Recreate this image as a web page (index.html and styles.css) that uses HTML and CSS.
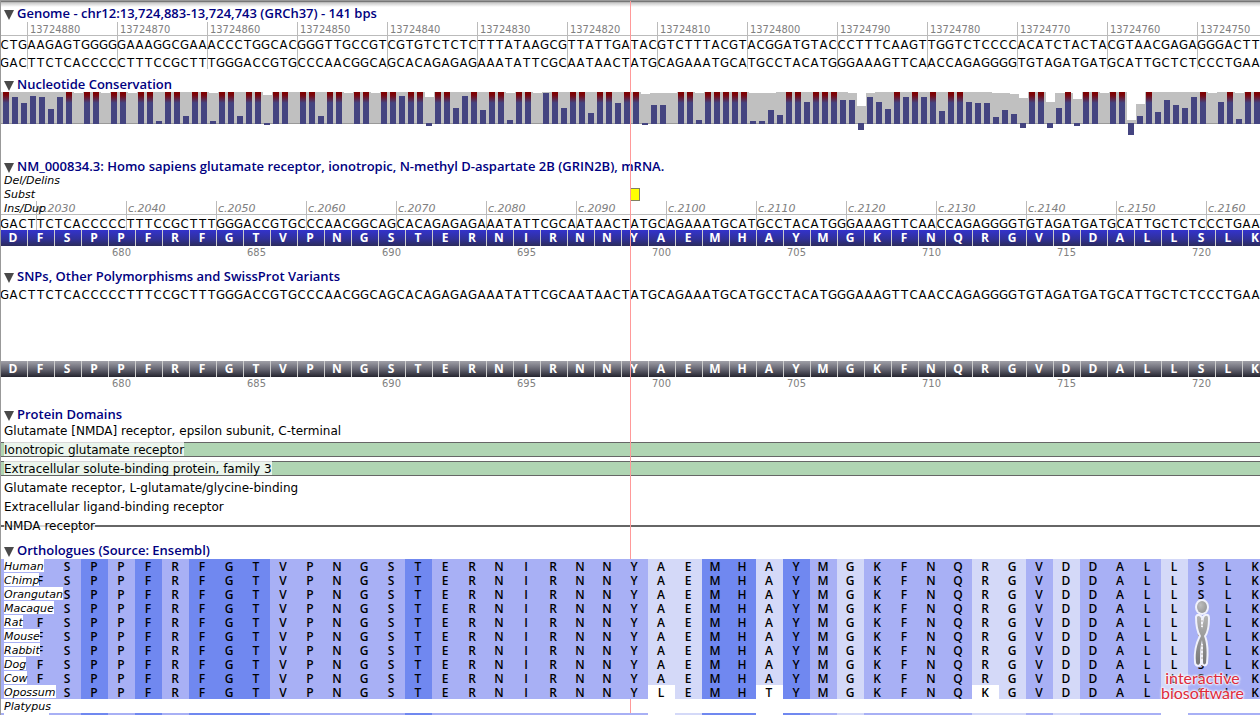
FILE: index.html
```
<!DOCTYPE html>
<html lang="en">
<head>
<meta charset="utf-8">
<title>Genome - chr12:13,724,883-13,724,743 (GRCh37)</title>
<link rel="stylesheet" href="styles.css">
</head>
<body>
<svg class="defs" width="0" height="0" aria-hidden="true">
  <defs>
    <symbol id="arrow" viewBox="0 0 10 10"><path d="M0 0h10L5 10z" fill="#4a4a4a"/></symbol>
    <linearGradient id="hot" x1="0" y1="0" x2="0" y2="1">
      <stop offset="0" stop-color="#800000"/>
      <stop offset="0.09" stop-color="#7c0408"/>
      <stop offset="0.34" stop-color="#444480"/>
      <stop offset="1" stop-color="#444480"/>
    </linearGradient>
  </defs>
</svg>
<main class="viewer">
  <section class="track genome">
    <h2 class="title"><button type="button"><svg class="arrow"><use href="#arrow"/></svg>Genome - chr12:13,724,883-13,724,743 (GRCh37) - 141 bps</button></h2>
    <div class="scaled scaled-genome">
      <div class="ruler" id="genome-ruler"></div>
      <div class="bases" data-strand="template"></div>
      <div class="bases" data-strand="coding"></div>
    </div>
  </section>

  <section class="track conservation">
    <h2 class="title"><button type="button"><svg class="arrow"><use href="#arrow"/></svg>Nucleotide Conservation</button></h2>
    <svg class="chart" id="chart" width="1260" height="46"></svg>
  </section>

  <section class="track transcript">
    <h2 class="title"><button type="button"><svg class="arrow"><use href="#arrow"/></svg>NM_000834.3: Homo sapiens glutamate receptor, ionotropic, N-methyl D-aspartate 2B (GRIN2B), mRNA.</button></h2>
    <div class="variant-row">Del/Delins</div>
    <div class="variant-row">Subst<span class="marker"></span></div>
    <div class="scaled scaled-mrna">
      <div class="ruler" id="mrna-ruler"><span class="row-name">Ins/Dup</span></div>
      <div class="bases compact" data-strand="coding"></div>
    </div>
    <div class="aminos blue"></div>
    <div class="numbers"></div>
  </section>

  <section class="track snps">
    <h2 class="title"><button type="button"><svg class="arrow"><use href="#arrow"/></svg>SNPs, Other Polymorphisms and SwissProt Variants</button></h2>
    <div class="bases" data-strand="coding"></div>
    <div class="aminos grey"></div>
    <div class="numbers"></div>
  </section>

  <section class="track domains">
    <h2 class="title"><button type="button"><svg class="arrow"><use href="#arrow"/></svg>Protein Domains</button></h2>
    <ul class="domain-list">
      <li class="domain"><span>Glutamate [NMDA] receptor, epsilon subunit, C-terminal</span></li>
      <li class="domain filled"><span>Ionotropic glutamate receptor</span></li>
      <li class="domain filled"><span>Extracellular solute-binding protein, family 3</span></li>
      <li class="domain"><span>Glutamate receptor, L-glutamate/glycine-binding</span></li>
      <li class="domain"><span>Extracellular ligand-binding receptor</span></li>
      <li class="domain lined"><span>NMDA receptor</span></li>
    </ul>
  </section>

  <section class="track orthologues">
    <h2 class="title"><button type="button"><svg class="arrow"><use href="#arrow"/></svg>Orthologues (Source: Ensembl)</button></h2>
    <div id="alignment"></div>
  </section>

  <div class="cursor-line"></div>
  <div class="left-edge"></div>

  <div class="brand">
    <svg width="20" height="72" viewBox="0 0 20 72" aria-hidden="true">
      <defs>
        <linearGradient id="metal" x1="0" y1="0" x2="0" y2="1">
          <stop offset="0" stop-color="#b4b4b4"/><stop offset="1" stop-color="#777"/>
        </linearGradient>
        <radialGradient id="head" cx="0.35" cy="0.35" r="0.8">
          <stop offset="0" stop-color="#bdbdbd"/><stop offset="1" stop-color="#929292"/>
        </radialGradient>
      </defs>
      <ellipse cx="10" cy="9" rx="5" ry="6" fill="url(#head)" stroke="#f0f1fc" stroke-width="4" paint-order="stroke"/>
      <path d="M5 19C6 17 8 18 9 20L10 31L12 20C13 17 16 17 16 20C16 28 15 34 12 38C15 46 15 56 14 65C13 67 11 67 11 64C11 56 11 48 10 42C8 49 8 56 8 65C7 68 4 67 4 64C3 54 5 46 9 38C6 33 5 26 5 19Z" fill="url(#metal)" stroke="#f0f1fc" stroke-width="4" stroke-linejoin="round" paint-order="stroke"/>
      <path d="M10 21v8M10 46v18" stroke="#f4f4fa" stroke-width="2"/>
      <path d="M10 22v7M10 47v16" stroke="#b5b0ac" stroke-width="1" stroke-dasharray="2 2"/>
    </svg>
    <span>interactive</span>
    <span>biosoftware</span>
  </div>
</main>
<script src="tracks.js"></script>
</body>
</html>
```
FILE: styles.css
```
* { box-sizing: border-box; }

body {
  margin: 0;
  background: #fff;
  color: #000;
  font: 12px/17px "DejaVu Sans", Verdana, sans-serif;
}

.defs { position: absolute; }

.viewer {
  position: relative;
  height: 100vh;
  overflow: hidden;
  padding-top: 6px;
  background: linear-gradient(#999 0, #999 1px, #777 1px, #777 2px, #bbb 2px, #bbb 3px, #ccc 3px, #fff 7px) no-repeat 0 0 / 100% 7px;
}

.title {
  margin: 0;
  height: 15px;
  font: 600 13px/15px "Open Sans", "Trebuchet MS", sans-serif;
}
.title button {
  display: flex;
  gap: 3px;
  margin: 0;
  padding: 0 0 0 4px;
  border: 0;
  background: none;
  color: #000080;
  font: inherit;
  white-space: nowrap;
}
.arrow { width: 10px; height: 10px; margin-top: 4px; }
.genome .title { height: 16px; }

.scaled {
  background-image: linear-gradient(to right, #bbb 1px, transparent 1px);
  background-repeat: repeat-x;
  background-size: 90px 100%;
}
.scaled-genome { background-size: 90px 47px; background-position: 27px 0; }
.scaled-mrna { background-position: 36px 0; }

.ruler {
  position: relative;
  display: flex;
  height: 14px;
  border-bottom: 1px solid #bbb;
  color: #808080;
  font-size: 11px;
  line-height: 16px;
}
.ruler .tick { flex: none; width: 90px; }
#genome-ruler { padding-left: 30px; font-family: "DejaVu Sans Condensed", Tahoma, sans-serif; }
#mrna-ruler { padding-left: 38px; font-style: italic; }
.row-name { position: absolute; left: 4px; top: 0; color: #000; }

.bases {
  display: flex;
  height: 18px;
  font: 13px/18px "DejaVu Sans Condensed", Tahoma, sans-serif;
}
.bases span { flex: none; width: 9px; display: flex; justify-content: center; }
.bases.compact { height: 15px; }

.conservation { padding-top: 5px; }
.chart { display: block; }

.transcript { padding-top: 21px; }
.transcript .title { height: 14px; }
.variant-row {
  position: relative;
  height: 14px;
  padding-left: 4px;
  font-size: 11px;
  line-height: 16px;
  font-style: italic;
}
.marker {
  position: absolute;
  left: 630px;
  top: 1px;
  width: 10px;
  height: 13px;
  background: #ff0;
  border: 1px solid #808060;
}

.aminos {
  display: flex;
  height: 16px;
  color: #fff;
  font: 700 12px/16px "Open Sans", sans-serif;
}
.aminos span { flex: none; width: 27px; padding-right: 2px; text-align: center; border-left: 1px solid #ccc; }
.blue { background: linear-gradient(#3333cc, #30309a 55%, #2c2c5c); }
.grey { background: linear-gradient(#a0a0a8, #666672 50%, #24242e); }

.numbers {
  display: flex;
  height: 13px;
  padding-left: 54px;
  color: #808080;
  font: 11px/13px "DejaVu Sans Condensed", Tahoma, sans-serif;
}
.numbers span { flex: none; width: 135px; text-align: center; }

.snps { padding-top: 10px; }
.snps .bases { margin: 2px 0 57px; }

.domains { padding-top: 17px; }
.domain-list {
  display: grid;
  gap: 4px;
  margin: 1px 0 0;
  padding: 0;
  list-style: none;
}
.domain { height: 15px; padding-left: 4px; }
.domain span { display: inline-block; background: rgba(255, 255, 255, 0.75); }
.domain.filled {
  background: linear-gradient(#666 1px, #b0d5b3 1px, #b0d5b3 14px, #666 14px);
}
.domain.filled span { height: 14px; }
.domain.lined { background: linear-gradient(#666, #666) no-repeat 0 7px / 100% 2px; }

.orthologues { padding-top: 10px; }
#alignment { padding-top: 1px; }
.species {
  position: relative;
  height: 14px;
  font: 600 12px/15px "Open Sans", sans-serif;
}
.residues { position: relative; z-index: 2; display: flex; }
.residues span { flex: none; width: 27px; height: 14px; padding-right: 1px; text-align: center; }
.name {
  position: absolute;
  z-index: 3;
  left: 4px;
  top: 0;
  height: 13px;
  background: #fff;
  font: italic 11px/15px "DejaVu Sans", Verdana, sans-serif;
}
.name:empty { width: 45px; }
.strong { background: #7088f0; }
.medium { background: #a8b0f5; }
.light { background: #d4d9f8; }
.none { background: #fff; }

.cursor-line {
  position: absolute;
  z-index: 1;
  left: 630px;
  top: 1px;
  bottom: 0;
  width: 1px;
  background: #f99;
}
.left-edge {
  position: absolute;
  z-index: 4;
  inset: 0 auto 0 0;
  width: 1px;
  background: #999;
}

.brand {
  position: absolute;
  z-index: 5;
  right: 16px;
  bottom: 15px;
  display: flex;
  flex-direction: column;
  align-items: center;
  color: #dd2a3c;
  font: 16px/15px Lato, sans-serif;
  text-shadow: 0 0 2px #fff, 0 0 2px #fff, 0 0 3px #fff, 0 0 3px #fff;
}
```
FILE: tracks.js
```
const coding = "GACTTCTCACCCCCTTTCCGCTTTGGGACCGTGCCCAACGGCAGCACAGAGAGAAATATTCGCAATAACTATGCAGAAATGCATGCCTACATGGGAAAGTTCAACCAGAGGGGTGTAGATGATGCATTGCTCTCCCTGAA";
const complement = { A: "T", T: "A", C: "G", G: "C" };
const protein = "DFSPPFRFGTVPNGSTERNIRNNYAEMHAYMGKFNQRGVDDALLSLK";

function fill(parent, items, className) {
  for (const item of items) {
    const cell = document.createElement("span");
    if (className) cell.className = className;
    cell.textContent = item;
    parent.appendChild(cell);
  }
}

// Sequences
document.querySelectorAll(".bases").forEach(row => {
  const bases = [...coding];
  fill(row, row.dataset.strand === "coding" ? bases : bases.map(b => complement[b]));
});
document.querySelectorAll(".aminos").forEach(row => fill(row, protein));
document.querySelectorAll(".numbers").forEach(row => fill(row, Array.from({ length: 9 }, (_, i) => 680 + i * 5)));

// Rulers
const ticks = Array.from({ length: 14 }, (_, i) => i * 10);
fill(document.getElementById("genome-ruler"), ticks.map(t => 13724880 - t), "tick");
fill(document.getElementById("mrna-ruler"), ticks.map(t => "c." + (2030 + t)), "tick");

// Conservation scores; 32 is fully conserved
const F = 32;
const scores = [
  F,27,21,28,27,15,27,F,0,F,F,0,F,F,0,F,F,3,F,F,8,F,F,3,F,F,8,F,F,-1,F,F,0,F,F,8,F,F,0,F,F,0,F,F,28,F,F,
  -2,F,F,16,28,F,14,F,F,4,F,F,0,31,F,16,F,F,11,F,F,21,F,F,-1,19,19,0,F,F,4,F,F,F,F,F,3,3,14,9,F,F,22,F,F,F,
  24,24,-6,27,22,15,F,27,F,27,F,13,F,F,22,21,21,7,14,10,-4,F,F,-4,16,F,-2,F,F,0,F,F,-11,8,F,12,24,19,16,27,F,0,22,F,5,F,F
];
const coverage = {
  8: 31, 11: 31, 14: 31, 23: 31, 29: 29, 38: 31, 41: 31, 47: 27, 56: 31, 59: 31, 71: 30, 72: 31, 73: 31, 74: 31,
  77: 31, 83: 31, 84: 31, 85: 31, 94: 31, 95: 18, 96: 31, 110: 31, 111: 31, 112: 30, 113: 26, 116: 22, 117: 31,
  118: 31, 119: 25, 122: 31, 125: 4, 126: 20, 134: 31, 137: 31
};
const rect = (x, y, w, h, fill) => `<rect x="${x}" y="${y}" width="${w}" height="${h}" fill="${fill}"/>`;
let back = "", bars = "";
scores.forEach((score, i) => {
  const x = i * 9, cover = coverage[i] ?? F;
  back += rect(i ? x + 2 : 0, 32 - cover, 9 + (i ? 0 : 2), cover, "#c0c0c0");
  if (score === F) bars += rect(x + 3, 0, 6, 32, "url(#hot)");
  else if (score > 0) bars += rect(x + 3, 32 - score, 6, score, "#444480");
  else if (score < 0) bars += rect(x + 3, 31, 6, 1 - score, "#444480");
});
document.getElementById("chart").innerHTML = back + rect(0, 31, 1260, 1, "#999") + bars;

// Orthologue alignment
const shades = "mmmsmsmsssmmmmmsmmmmmmmmllsslsmlmmmmllmlmmmlmmm";
const shadeClass = { s: "strong", m: "medium", l: "light" };
const species = [
  ["Human"], ["Chimp"], ["Orangutan"], ["Macaque"], ["Rat"], ["Mouse"], ["Rabbit"], ["Dog"], ["Cow"],
  ["Opossum", { 24: "L", 28: "T", 36: "K" }],
  ["Platypus", null],
  ["", { 24: "", 28: "", 43: "" }]
];
const alignment = document.getElementById("alignment");
for (const [name, changes = {}] of species) {
  const row = document.createElement("div");
  row.className = "species";
  if (changes) {
    const residues = document.createElement("div");
    residues.className = "residues";
    [...protein].forEach((letter, i) => {
      const cell = document.createElement("span");
      cell.className = i in changes ? "none" : shadeClass[shades[i]];
      cell.textContent = name ? changes[i] ?? letter : "";
      residues.appendChild(cell);
    });
    row.appendChild(residues);
  }
  const label = document.createElement("span");
  label.className = "name";
  label.textContent = name;
  row.appendChild(label);
  alignment.appendChild(row);
}
```
